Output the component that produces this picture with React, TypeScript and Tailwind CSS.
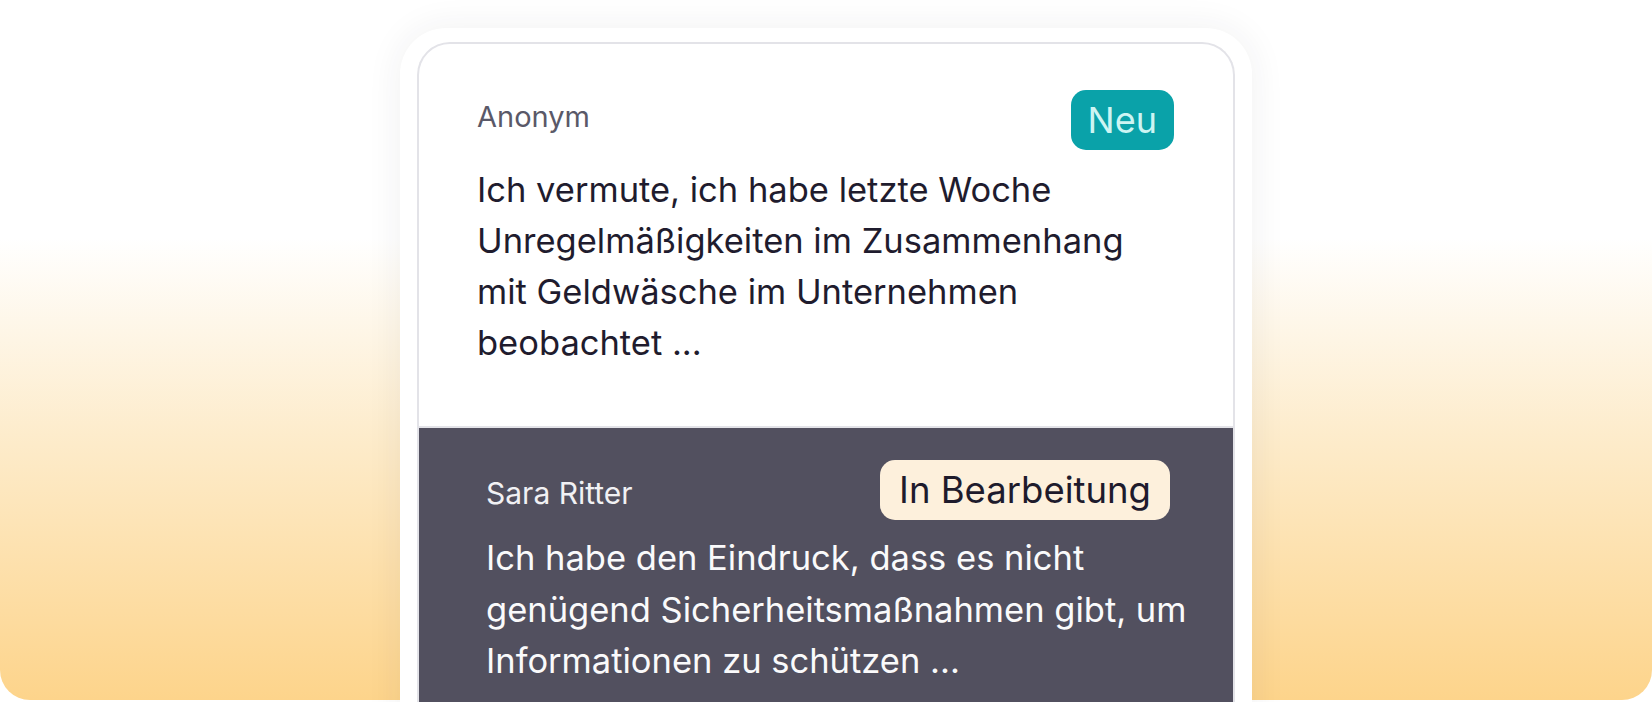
import React from "react";

export default function App() {
  return (
    <div className="w-[1652px] h-[702px] bg-white overflow-hidden" style={{ fontFamily: "Inter, 'Noto Sans', sans-serif" }}>
      <div className="relative h-[700px] rounded-[30px] bg-[linear-gradient(to_bottom,#ffffff_34%,#fdeccc_62%,#fdd48b_100%)] flex justify-center pt-[28px]">
        <div className="w-[852px] h-[720px] bg-white rounded-t-[46px] px-[17px] pt-[14px] shadow-[0_0_36px_rgba(40,40,60,0.07)]">
          <div className="h-full rounded-t-[33px] border-2 border-b-0 border-[#e3e3e8] bg-white overflow-hidden flex flex-col">
            <div className="pl-[58px] pr-[59px] pt-[46px] pb-[58px] border-b-2 border-[#e3e3e8]">
              <div className="flex items-center justify-between">
                <span className="text-[29px] leading-[43px] text-[#5a5968] mb-[8px]">Anonym</span>
                <span className="h-[60px] px-[17px] rounded-[15px] bg-[#0aa2a9] text-[#cdf5f3] text-[36px] leading-[60px]">Neu</span>
              </div>
              <p className="mt-[14px] whitespace-nowrap text-[34.5px] leading-[51px] text-[#1f1c2e]">
                Ich vermute, ich habe letzte Woche
                <br />
                Unregelmäßigkeiten im Zusammenhang
                <br />
                mit Geldwäsche im Unternehmen
                <br />
                beobachtet ...
              </p>
            </div>
            <div className="flex-1 bg-[#52505f] pl-[67px] pr-[63px] pt-[32px]">
              <div className="flex items-center justify-between">
                <span className="text-[30px] leading-[42px] text-[#f1f1f4] mt-[6px]">Sara Ritter</span>
                <span className="h-[60px] px-[19px] rounded-[15px] bg-[#fdf0dc] text-[#1e1b2c] text-[36.5px] leading-[60px] whitespace-nowrap">In Bearbeitung</span>
              </div>
              <p className="mt-[12px] whitespace-nowrap text-[34.5px] leading-[51.5px] text-[#fafafb]">
                Ich habe den Eindruck, dass es nicht
                <br />
                genügend Sicherheitsmaßnahmen gibt, um
                <br />
                Informationen zu schützen ...
              </p>
            </div>
          </div>
        </div>
      </div>
    </div>
  );
}
